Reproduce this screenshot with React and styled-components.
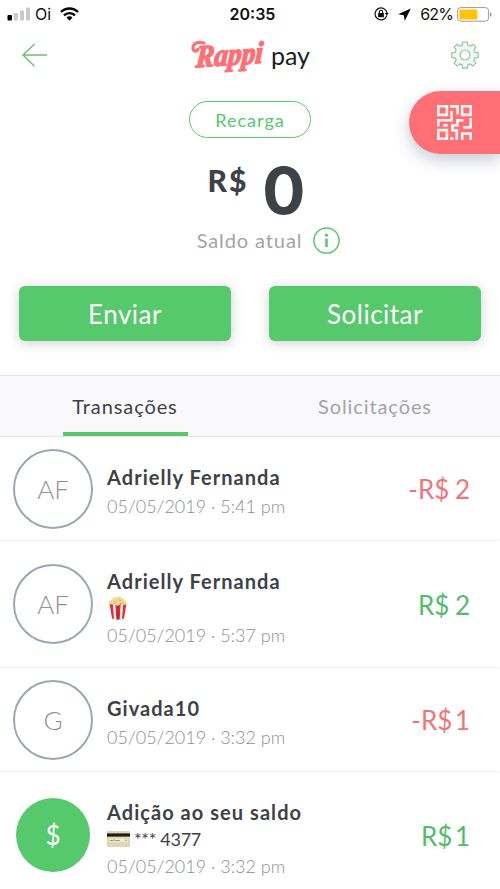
import styled, { createGlobalStyle, css } from 'styled-components'

const green = '#55c96c'
const coral = '#ff6f75'

const GlobalStyle = createGlobalStyle`
  * {
    box-sizing: border-box;
  }

  body {
    margin: 0;
    background: #fff;
    color: #3e4146;
    font-family: Lato, 'Liberation Sans', sans-serif;
    overflow: hidden;
  }

  button {
    border: 0;
    padding: 0;
    background: none;
    font: inherit;
    color: inherit;
  }

  svg {
    display: block;
    flex: none;
  }
`

const Screen = styled.div`
  position: relative;
  display: flex;
  flex-direction: column;
  width: 500px;
  height: 889px;
  overflow: hidden;

  > * {
    flex-shrink: 0;
  }
`

/**
 * Barra de status do telefone
 */
const StatusBar = styled.div`
  display: grid;
  grid-template-columns: 1fr auto 1fr;
  align-items: center;
  height: 28px;
  padding: 0 8px 0 7px;
  color: #111;
  font-family: Inter, 'Liberation Sans', sans-serif;
  font-size: 16px;
`

const StatusGroup = styled.div`
  display: flex;
  align-items: center;
  justify-content: ${({ $end }) => ($end ? 'flex-end' : 'flex-start')};
`

const StatusIcons = styled.div`
  display: flex;
  align-items: center;
  gap: 9px;
`

const Carrier = styled.span`
  margin: 0 9px 0 5px;
`

const Clock = styled.span`
  margin-left: 6px;
  font-weight: 600;
`

const Percent = styled.span`
  margin: 0 4px 0 9px;
  letter-spacing: -0.9px;
`

/**
 * Cabeçalho com voltar, logo e configurações
 */
const Header = styled.header`
  display: flex;
  align-items: center;
  justify-content: space-between;
  height: 56px;
  padding: 0 20px 2px 21px;
`

const Logo = styled.div`
  display: flex;
  align-items: center;
  gap: 3px;
  margin-left: 2px;
`

const LogoMark = styled.svg`
  width: 78px;
  height: 54px;
  overflow: visible;
`

const LogoWord = styled.text`
  fill: ${coral};
  stroke: ${coral};
  stroke-width: 1.5px;
  stroke-linejoin: round;
  font-family: 'Liberation Serif', serif;
  font-size: 31px;
  font-style: italic;
  font-weight: 700;
`

const LogoSwash = styled.path`
  fill: none;
  stroke: ${coral};
  stroke-width: 3.2px;
  stroke-linecap: round;
`

const LogoSuffix = styled.span`
  color: #1d1d1f;
  font-size: 25px;
  line-height: 30px;
`

const QrButton = styled.button`
  position: absolute;
  top: 91px;
  right: 0;
  display: flex;
  align-items: center;
  width: 91px;
  height: 63px;
  padding-left: 28px;
  border-radius: 32px 0 0 32px;
  background: ${coral};
  box-shadow: 0 6px 16px rgba(60, 70, 100, 0.28);
`

/**
 * Saldo
 */
const Balance = styled.section`
  display: flex;
  flex-direction: column;
  align-items: center;
  height: 202px;
  padding-top: 17px;
`

const RechargeButton = styled.button`
  width: 122px;
  height: 37px;
  border: 1.5px solid ${green};
  border-radius: 19px;
  color: ${green};
  font-size: 18px;
  letter-spacing: 1px;
`

const Amount = styled.div`
  display: flex;
  align-items: flex-start;
  gap: 14px;
  margin: 24px 0 0 13px;
  height: 62px;
`

const Currency = styled.span`
  font-size: 30px;
  font-weight: 900;
  line-height: 36px;
  letter-spacing: 2px;
`

const Value = styled.span`
  font-family: Inter, 'Liberation Sans', sans-serif;
  font-size: 64px;
  font-weight: 700;
  line-height: 58px;
`

const BalanceLabel = styled.div`
  display: flex;
  align-items: center;
  gap: 11px;
  margin: 3px 0 0 37px;
  color: #a3a3a6;
  font-size: 20px;
  line-height: 27px;
  letter-spacing: 0.9px;
`

const Actions = styled.div`
  display: grid;
  grid-template-columns: 1fr 1fr;
  gap: 38px;
  height: 89px;
  padding: 0 19px;
`

const ActionButton = styled.button`
  height: 55px;
  border-radius: 6px;
  background: ${green};
  box-shadow: 0 2px 12px rgba(60, 50, 70, 0.24);
  color: #fff;
  font-size: 26px;
  letter-spacing: 0.5px;
`

/**
 * Abas
 */
const Tabs = styled.nav`
  display: grid;
  grid-template-columns: 1fr 1fr;
  height: 62px;
  border-top: 1px solid #e6e6e9;
  border-bottom: 1px solid #e6e6e9;
  background: #f9f9fc;
`

const Tab = styled.button`
  justify-self: center;
  width: 125px;
  padding-top: 4px;
  border-bottom: 4px solid ${({ $active }) => ($active ? green : 'transparent')};
  color: ${({ $active }) => ($active ? '#3e4146' : '#a3a3a6')};
  font-size: 20px;
  letter-spacing: 0.9px;
  white-space: nowrap;
`

/**
 * Lista de transações
 */
const List = styled.ul`
  margin: 0;
  padding: 0;
  list-style: none;
`

const Row = styled.li`
  display: flex;
  align-items: center;
  width: 498px;
  height: ${({ $tall }) => ($tall ? 127 : 104)}px;
  padding: 0 28px 0 13px;
  border-bottom: 1.5px solid #ededef;
`

const Avatar = styled.div`
  display: flex;
  align-items: center;
  justify-content: center;
  flex: none;
  width: 80px;
  height: 80px;
  margin-right: 14px;
  border: 2.5px solid #9ba8b1;
  border-radius: 50%;
  color: #8d9194;
  font-size: 26px;
  font-weight: 300;

  ${({ $filled }) =>
    $filled &&
    css`
      width: 74px;
      height: 74px;
      margin: 0 17px 0 3px;
      border: 0;
      background: ${green};
      color: #fff;
      font-weight: 400;
    `}
`

const Details = styled.div`
  flex: 1;
  padding-top: ${({ $tall }) => ($tall ? 9 : 7)}px;
`

const Name = styled.div`
  font-size: 20px;
  font-weight: 700;
  line-height: 28px;
  letter-spacing: 1.05px;
`

const Note = styled.div`
  display: flex;
  align-items: center;
  gap: 4px;
  height: 25px;
  font-size: 18px;
  letter-spacing: -0.3px;
`

const DateText = styled.div`
  color: #8e8e92;
  font-size: 18px;
  font-weight: 300;
  line-height: 30px;
`

const Price = styled.div`
  padding-top: 1px;
  color: ${({ $out }) => ($out ? '#f0757a' : '#52bd69')};
  font-size: 26px;
  word-spacing: ${({ $narrow }) => ($narrow ? -4 : -1)}px;
`

const SignalIcon = () => (
  <svg width="23" height="14" viewBox="0 0 23 14">
    <rect x="0.5" y="8" width="4.5" height="5.5" rx="1" fill="#000" />
    <g fill="#c9c9c9">
      <rect x="7" y="6" width="4" height="7.5" rx="1" />
      <rect x="13" y="3.5" width="4" height="10" rx="1" />
      <rect x="19" y="0.5" width="4" height="13" rx="1" />
    </g>
  </svg>
)

const WifiIcon = () => (
  <svg width="19" height="14" viewBox="0 0 19 14" fill="none" stroke="#000" strokeWidth="2.4">
    <path d="M1 5a12 12 0 0 1 17 0" />
    <path d="M4 8.4a7.8 7.8 0 0 1 11 0" />
    <path d="M9.5 13.7 6.5 10.6a4.2 4.2 0 0 1 6 0Z" fill="#000" stroke="none" />
  </svg>
)

const LockIcon = () => (
  <svg width="15" height="14" viewBox="0 0 15 14" fill="none" stroke="#111">
    <path d="M12.8 8.6A6 6 0 1 1 13 6" strokeWidth="1.2" />
    <path d="M10.7 6h4L12.8 8.7Z" fill="#111" stroke="none" />
    <rect x="4.1" y="6.1" width="5.8" height="4.2" rx="0.5" fill="#111" stroke="none" />
    <path d="M5.3 6.3V5a1.7 1.7 0 0 1 3.4 0v1.3" strokeWidth="1.1" />
  </svg>
)

const LocationIcon = () => (
  <svg width="13" height="13" viewBox="0 0 13 13">
    <path d="M12.8.4.2 6.2l5.6 1 1 5.6Z" fill="#000" />
  </svg>
)

const BatteryIcon = () => (
  <svg width="35" height="15" viewBox="0 0 35 15">
    <rect x="0.6" y="0.6" width="31" height="13.6" rx="3.2" fill="#fff" stroke="#9b9b9b" />
    <rect x="2.4" y="2.4" width="18" height="10" rx="1" fill="#fdc40a" />
    <path d="M33 5.2c2.1.6 2.1 4 0 4.6Z" fill="#9b9b9b" />
  </svg>
)

const BackIcon = () => (
  <svg width="27" height="26" viewBox="0 0 27 26" fill="none" stroke="#6abf7c" strokeWidth="1.4">
    <path d="M13.5 2 2 13l11.5 11.3M2 13h24" />
  </svg>
)

const GearIcon = () => (
  <svg width="30" height="30" viewBox="0 0 30 30" fill="#f3fbf6" stroke="#8cc8a0" strokeWidth="1.2" strokeLinejoin="round">
    <path d="M12.7 2h4.6l.5 3.2 2.3 1 2.8-2 3 3-2 2.8 1 2.3 3.3.5v4.5l-3.3.5-1 2.3 2 2.8-3 3-2.8-2-2.3 1-.5 3.3h-4.6l-.5-3.3-2.3-1-2.8 2-3-3 2-2.8-1-2.3-3.3-.5v-4.5l3.3-.5 1-2.3-2-2.8 3-3 2.8 2 2.3-1Z" />
    <circle cx="15" cy="15" r="5" fill="#fff" />
  </svg>
)

const QrIcon = () => (
  <svg width="35" height="35" viewBox="0 0 35 35" fill="none" stroke="#fff6ef" strokeWidth="2.6">
    <path d="M1.3 1.3h8.6v8.6H1.3zM25.100 1.3h8.6v8.6h-8.6zM1.3 25.100h8.6v8.6H1.3z" />
    <path d="M13 1.4h7.6v8.2M14.6 6v9.2H1.3v6.4M6.2 20.4h4.4M33.7 13v9.4h-7.5M26.4 15.4h-6v5h-5v5h4.4V35M13 33.6h3.4M25.2 35v-6.4h8.5V35" />
  </svg>
)

const InfoIcon = () => (
  <svg width="27" height="27" viewBox="0 0 27 27" fill="none" stroke={green}>
    <circle cx="13.5" cy="13.5" r="12.6" strokeWidth="1.5" />
    <path d="M13.5 11.5V20" strokeWidth="2.6" />
    <circle cx="13.5" cy="8.2" r="1.6" fill={green} stroke="none" />
  </svg>
)

const PopcornIcon = () => (
  <svg width="22" height="24" viewBox="0 0 22 24">
    <path d="M2.5 7.5 5 22.5q6 1.8 12 0L19.500 7.5Z" fill="#d8323a" />
    <path d="M5.8 8h2.5l1 15.3-2.3-.3ZM13.7 8h2.5L15 23l-2.3.3Z" fill="#fbeeee" />
    <path d="M10.2 8h1.6v15.500h-1.6Z" fill="#b92730" />
    <g fill="#f3d98b">
      <circle cx="4.6" cy="6.3" r="2.3" />
      <circle cx="8" cy="3.9" r="2.6" />
      <circle cx="12.2" cy="3.2" r="2.6" />
      <circle cx="15.2" cy="5" r="2.4" />
      <circle cx="17.6" cy="7" r="2" />
      <circle cx="10.5" cy="6.7" r="2.8" />
    </g>
    <path d="M6.5 5.8q1.5-1.5 2.5.5M11.5 4.2q1.5-1 2.3.7M13.5 7.5q1.2-1.2 2.2.2" fill="none" stroke="#cf9f48" strokeWidth="0.9" />
  </svg>
)

const CardIcon = () => (
  <svg width="23" height="16" viewBox="0 0 23 16">
    <rect width="23" height="16" rx="1" fill="#ddd6b0" />
    <rect y="2.4" width="23" height="3.2" fill="#1c1b18" />
    <rect x="2" y="7.5" width="19" height="3.6" fill="#eee9cf" />
    <path d="M3 9.5h3l1-.7 1 .7h5M18 9.3h2" fill="none" stroke="#8d8973" strokeWidth="0.8" />
  </svg>
)

const transactions = [
  { initials: 'AF', name: 'Adrielly Fernanda', date: '05/05/2019 · 5:41 pm', price: '-R$ 2', out: true },
  { initials: 'AF', name: 'Adrielly Fernanda', note: <PopcornIcon />, date: '05/05/2019 · 5:37 pm', price: 'R$ 2' },
  { initials: 'G', name: 'Givada10', date: '05/05/2019 · 3:32 pm', price: '-R$ 1', out: true },
  {
    initials: '$',
    filled: true,
    name: 'Adição ao seu saldo',
    note: (
      <>
        <CardIcon />
        <span>*** 4377</span>
      </>
    ),
    date: '05/05/2019 · 3:32 pm',
    price: 'R$ 1',
  },
]

/**
 * Tela principal da carteira
 * Exibe saldo, ações e as últimas transações
 */
export default function App() {
  return (
    <Screen>
      <GlobalStyle />

      <StatusBar>
        <StatusGroup>
          <SignalIcon />
          <Carrier>Oi</Carrier>
          <WifiIcon />
        </StatusGroup>
        <Clock>20:35</Clock>
        <StatusGroup $end>
          <StatusIcons>
            <LockIcon />
            <LocationIcon />
          </StatusIcons>
          <Percent>62%</Percent>
          <BatteryIcon />
        </StatusGroup>
      </StatusBar>

      <Header>
        <button aria-label="Voltar">
          <BackIcon />
        </button>
        <Logo>
          <LogoMark viewBox="0 0 78 54">
            <LogoWord x="5" y="37" textLength="67" lengthAdjust="spacingAndGlyphs" transform="rotate(-4 39 27) translate(5 0) skewX(-8)">
              Rappi
            </LogoWord>
            <LogoSwash d="M14 15C7 13 2.500 16 3 20.500c.5 3.500 4 3 5 1" />
          </LogoMark>
          <LogoSuffix>pay</LogoSuffix>
        </Logo>
        <button aria-label="Configurações">
          <GearIcon />
        </button>
      </Header>

      <QrButton aria-label="Código QR">
        <QrIcon />
      </QrButton>

      <Balance>
        <RechargeButton>Recarga</RechargeButton>
        <Amount>
          <Currency>R$</Currency>
          <Value>0</Value>
        </Amount>
        <BalanceLabel>
          Saldo atual
          <InfoIcon />
        </BalanceLabel>
      </Balance>

      <Actions>
        <ActionButton>Enviar</ActionButton>
        <ActionButton>Solicitar</ActionButton>
      </Actions>

      <Tabs>
        <Tab $active>Transações</Tab>
        <Tab>Solicitações</Tab>
      </Tabs>

      <List>
        {transactions.map((item, index) => (
          <Row key={index} $tall={Boolean(item.note)}>
            <Avatar $filled={item.filled}>{item.initials}</Avatar>
            <Details $tall={Boolean(item.note)}>
              <Name>{item.name}</Name>
              {item.note && <Note>{item.note}</Note>}
              <DateText>{item.date}</DateText>
            </Details>
            <Price $out={item.out} $narrow={item.price.endsWith('1')}>
              {item.price}
            </Price>
          </Row>
        ))}
      </List>
    </Screen>
  )
}
